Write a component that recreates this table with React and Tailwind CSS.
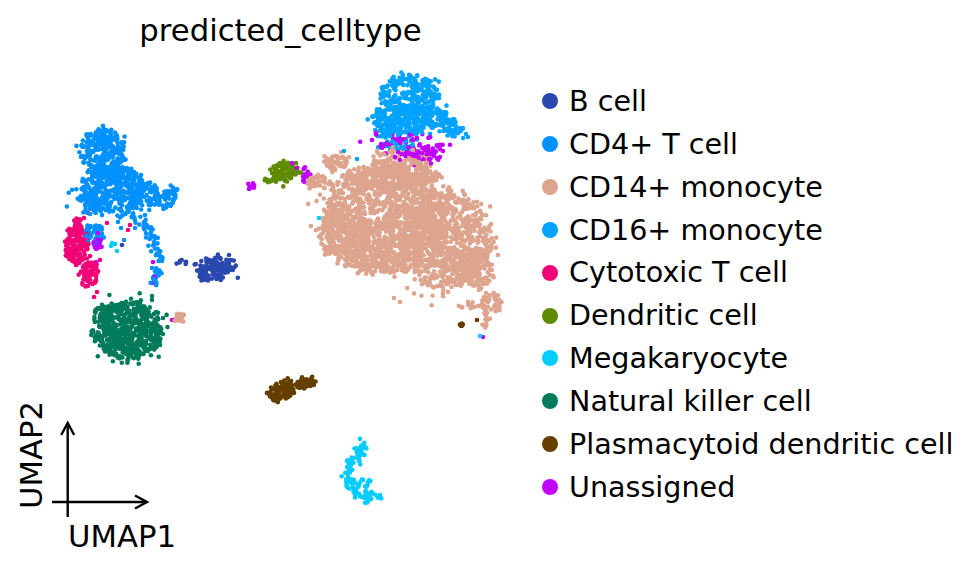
import React from "react";

const C = {
  b: "#2a48ad",
  cd4: "#0091ff",
  cd14: "#dda48e",
  cd16: "#00a3ff",
  cyto: "#f00577",
  dc: "#5f8b00",
  mega: "#00ccff",
  nk: "#007b5b",
  pdc: "#653e00",
  un: "#c000ff",
};

const legend = [
  ["B cell", C.b],
  ["CD4+ T cell", C.cd4],
  ["CD14+ monocyte", C.cd14],
  ["CD16+ monocyte", C.cd16],
  ["Cytotoxic T cell", C.cyto],
  ["Dendritic cell", C.dc],
  ["Megakaryocyte", C.mega],
  ["Natural killer cell", C.nk],
  ["Plasmacytoid dendritic cell", C.pdc],
  ["Unassigned", C.un],
];

// seeded random so the cloud is the same every render
let seed = 98765;
const rand = () => {
  seed |= 0;
  seed = (seed + 0x6d2b79f5) | 0;
  let t = Math.imul(seed ^ (seed >>> 15), 1 | seed);
  t = (t + Math.imul(t ^ (t >>> 7), 61 | t)) ^ t;
  return ((t ^ (t >>> 14)) >>> 0) / 4294967296;
};
const gauss = () => Math.sqrt(-2 * Math.log(rand() + 1e-9)) * Math.cos(2 * Math.PI * rand());

const points = [];

const blob = (c, cx, cy, rx, ry, n, rot = 0) => {
  const a = (rot * Math.PI) / 180;
  for (let i = 0; i < n; i++) {
    let r = Math.sqrt(rand());
    if (rand() < 0.1) r = 0.9 + Math.abs(gauss()) * 0.22;
    const th = 2 * Math.PI * rand();
    const u = (r * Math.cos(th) + gauss() * 0.06) * rx;
    const v = (r * Math.sin(th) + gauss() * 0.06) * ry;
    points.push([cx + u * Math.cos(a) - v * Math.sin(a), cy + u * Math.sin(a) + v * Math.cos(a), c]);
  }
};

const path = (c, pts, n, j) => {
  const segs = [];
  let total = 0;
  for (let i = 1; i < pts.length; i++) {
    const l = Math.hypot(pts[i][0] - pts[i - 1][0], pts[i][1] - pts[i - 1][1]);
    segs.push(l);
    total += l;
  }
  for (let k = 0; k < n; k++) {
    let d = rand() * total;
    let i = 0;
    while (d > segs[i] && i < segs.length - 1) {
      d -= segs[i];
      i++;
    }
    const t = d / segs[i];
    const x = pts[i][0] + (pts[i + 1][0] - pts[i][0]) * t;
    const y = pts[i][1] + (pts[i + 1][1] - pts[i][1]) * t;
    points.push([x + gauss() * j, y + gauss() * j, c]);
  }
};

const dots = (c, list) => list.forEach(([x, y]) => points.push([x, y, c]));

// CD4+ T cells, upper left
blob(C.cd4, 103, 151, 22, 21, 220);
blob(C.cd4, 101, 138, 12, 8, 30);
blob(C.cd4, 112, 190, 33, 24, 380);
blob(C.cd4, 90, 200, 10, 14, 50);
blob(C.cd4, 147, 195, 12, 12, 60);
blob(C.cd4, 164, 200, 12, 8, 45, -20);
blob(C.cd4, 173, 191, 5, 6, 12);
path(C.cd4, [[134, 214], [146, 230], [157, 248], [161, 262], [154, 285]], 70, 2.4);
blob(C.cd4, 95, 234, 10, 9, 40);
dots(C.cd4, [[121, 228], [124, 240], [135, 228], [145, 215], [118, 222], [152, 268], [153, 278]]);

// cytotoxic T
blob(C.cyto, 76, 245, 11, 20, 170);
blob(C.cyto, 90, 274, 9, 12, 65);
blob(C.cyto, 76, 222, 5, 5, 10);
dots(C.cyto, [[107, 223], [128, 230], [97, 292], [94, 297], [84, 218], [126, 342], [130, 225], [88, 213], [100, 260], [90, 256]]);

// unassigned near cytotoxic
blob(C.un, 98, 244, 6, 5, 22);
dots(C.un, [[96, 262], [155, 277], [152, 283], [153, 262], [98, 233], [89, 238]]);

// megakaryocyte strays
dots(C.mega, [[111, 246], [115, 244], [117, 251], [112, 243]]);

// NK
blob(C.nk, 128, 331, 32, 28, 560);
blob(C.nk, 103, 312, 10, 8, 35);
dots(C.nk, [[98, 308], [100, 316], [95, 322], [152, 296], [152, 300], [156, 312], [96, 335], [163, 318], [160, 345]]);

// B cell
blob(C.b, 214, 269, 18, 11, 135, -15);
path(C.b, [[176, 262], [190, 263], [200, 266]], 9, 1);
dots(C.b, [[122, 245], [229, 255], [231, 260]]);

// small monocyte patch near NK
blob(C.cd14, 179, 318, 6, 3.5, 14, -25);
dots(C.un, [[172, 320]]);

// CD16+ monocyte
blob(C.cd16, 409, 96, 30, 21, 240);
blob(C.cd16, 412, 120, 38, 15, 300);
blob(C.cd16, 452, 128, 14, 8, 45, 30);
blob(C.cd16, 385, 130, 10, 8, 35);
dots(C.cd16, [[466, 134], [468, 137], [344, 151], [357, 159], [390, 148], [384, 144]]);
blob(C.cd16, 395, 145, 20, 7, 25);

// unassigned under CD16
blob(C.un, 410, 145, 35, 14, 70);
blob(C.un, 425, 155, 12, 8, 25);
dots(C.un, [[440, 157], [443, 151], [400, 160], [414, 165], [372, 140], [376, 133]]);

// CD14+ monocyte main cloud
blob(C.cd14, 385, 215, 60, 48, 1150);
blob(C.cd14, 445, 240, 45, 45, 780);
blob(C.cd14, 345, 235, 25, 25, 260);
blob(C.cd14, 475, 268, 18, 18, 150);
blob(C.cd14, 390, 178, 45, 12, 220);
blob(C.cd14, 336, 163, 12, 7, 45);
blob(C.cd14, 400, 160, 30, 12, 110);
blob(C.cd14, 318, 182, 14, 7, 40);
blob(C.cd14, 380, 262, 30, 12, 120);
dots(C.cd14, [[394, 298], [400, 302], [479, 290], [486, 293], [341, 152], [338, 157]]);

// appendage bottom right
blob(C.cd14, 491, 304, 11, 10, 40);
path(C.cd14, [[458, 307], [480, 305]], 12, 1.8);
path(C.cd14, [[486, 312], [485, 330]], 10, 1.5);
blob(C.pdc, 462, 324, 3, 2, 6);
dots(C.pdc, [[477, 320]]);
dots(C.mega, [[480, 336]]);
dots(C.un, [[483, 337]]);
dots(C.mega, [[319, 218]]);

// dendritic
blob(C.dc, 285, 171, 13, 9, 80);
blob(C.dc, 271, 180, 7, 3, 16);
dots(C.dc, [[296, 163], [280, 163]]);
blob(C.un, 255, 187, 8, 3, 8);
blob(C.un, 306, 175, 4, 8, 16);
dots(C.un, [[297, 168], [292, 163], [249, 189]]);

// pDC
blob(C.pdc, 281, 391, 14, 9, 95, -30);
blob(C.pdc, 305, 383, 10, 5, 50, -15);

// megakaryocyte, a crescent open to the right
path(C.mega, [[364, 441], [362, 452], [352, 462], [348, 472], [350, 485], [358, 494], [370, 498], [380, 495]], 110, 3.2);
blob(C.mega, 365, 485, 7, 7, 12);

// shuffle so colours overlap like a real scatter
for (let i = points.length - 1; i > 0; i--) {
  const j = Math.floor(rand() * (i + 1));
  [points[i], points[j]] = [points[j], points[i]];
}

const font = "font-['DejaVu_Sans',sans-serif]";

export default function App() {
  return (
    <div className={`w-[970px] h-[568px] bg-white flex text-black overflow-hidden ${font}`}>
      <div className="w-[530px] flex flex-col shrink-0">
        <div className="h-[50px] pt-[16px] pl-[31px] text-center text-[30.7px] leading-none">predicted_celltype</div>
        <svg width="530" height="518" viewBox="0 50 530 518">
          {points.map((p, i) => (
            <circle key={i} cx={p[0].toFixed(1)} cy={p[1].toFixed(1)} r="2.3" fill={p[2]} />
          ))}
          <g stroke="black" strokeWidth="2.4" fill="none">
            <line x1="67.7" y1="517" x2="67.7" y2="424" />
            <polyline points="61.2,435 67.7,423 74.2,435" />
            <line x1="52" y1="502" x2="146" y2="502" />
            <polyline points="135,495.5 147,502 135,508.5" />
          </g>
          <text x="68" y="547" fontSize="30.7" fontFamily="DejaVu Sans, sans-serif" fill="black">
            UMAP1
          </text>
          <text transform="translate(42,509) rotate(-90)" fontSize="30.7" fontFamily="DejaVu Sans, sans-serif" fill="black">
            UMAP2
          </text>
        </svg>
      </div>
      <div className="flex flex-col pt-[80px]">
        {legend.map(([name, color]) => (
          <div key={name} className="h-[42.85px] flex items-center">
            <span className="w-[16px] h-[16px] rounded-full ml-[12px] mr-[11px] shrink-0" style={{ background: color }} />
            <span className="text-[28.6px] whitespace-nowrap">{name}</span>
          </div>
        ))}
      </div>
    </div>
  );
}
